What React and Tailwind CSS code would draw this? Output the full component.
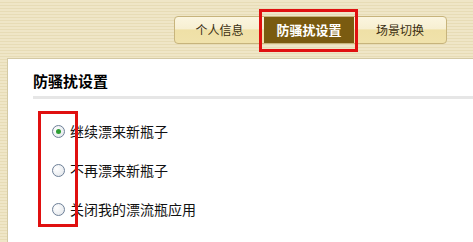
const tabs = [
  { label: '个人信息', w: 'w-[89px]' },
  { label: '防骚扰设置', w: 'w-[90px]', active: true },
  { label: '场景切换', w: 'w-[92px]' },
];

const options = [
  { label: '继续漂来新瓶子', checked: true },
  { label: '不再漂来新瓶子' },
  { label: '关闭我的漂流瓶应用' },
];

function Radio({ checked }) {
  return (
    <span className="w-[13px] h-[13px] rounded-full border border-[#6d7f97] bg-[radial-gradient(circle_at_35%_35%,#ffffff,#dfe3e8)] flex items-center justify-center shrink-0">
      {checked && <span className="w-[5px] h-[5px] rounded-full bg-[#2e9e34]" />}
    </span>
  );
}

export default function App() {
  return (
    <div className="w-[473px] h-[242px] overflow-hidden flex flex-col font-['Noto_Sans_CJK_SC',sans-serif] bg-[repeating-linear-gradient(180deg,#efe6c7_0px,#efe6c7_2px,#e7dcb6_2px,#e7dcb6_3px)]">
      {/* Tabs */}
      <div className="h-[58px] shrink-0 flex justify-end items-start pt-4 pr-[26px]">
        <div className="flex h-[28px] rounded-[4px] border border-[#c7b47c] bg-[linear-gradient(180deg,#fbf5df_0%,#f7efd2_45%,#efe0a6_50%,#f0e2ac_100%)]">
          {tabs.map((t) =>
            t.active ? (
              <div key={t.label} className={`relative ${t.w} flex items-center justify-center bg-[#7a5b10] text-white text-[13px] font-bold`}>
                {t.label}
                <span className="absolute -left-[5px] -right-[4px] -top-[8px] -bottom-[9px] border-[3px] border-[#e01010]" />
              </div>
            ) : (
              <div key={t.label} className={`${t.w} flex items-center justify-center text-[12px] text-[#3b2f12]`}>
                {t.label}
              </div>
            )
          )}
        </div>
      </div>

      {/* Panel */}
      <div className="flex-1 ml-[7px] bg-white border-l border-t border-[#d3c9a4] pl-[25px]">
        <div className="mt-[14px] text-[15px] leading-[16px] font-bold text-black">防骚扰设置</div>
        <div className="mt-[7px] h-[3px] bg-[#e6e6e6]" />

        <div className="relative mt-[13px]">
          {options.map((o) => (
            <label key={o.label} className="h-[39px] flex items-center pl-[19px] gap-[5px] text-[14px] text-[#111]">
              <Radio checked={o.checked} />
              <span>{o.label}</span>
            </label>
          ))}
          <span className="absolute left-[5px] -top-[1px] w-[40px] h-[116px] border-[3px] border-[#e01010]" />
        </div>
      </div>
    </div>
  );
}
